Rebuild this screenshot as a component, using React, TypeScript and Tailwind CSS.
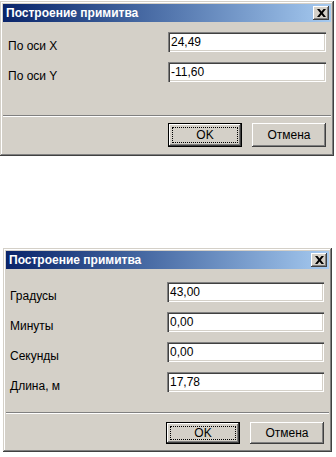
import React from "react";

type Row = { label: string; value: string };

const raised =
  "shadow-[inset_-1px_-1px_#404040,inset_1px_1px_#fff,inset_-2px_-2px_#808080]";

function CloseBox() {
  return (
    <div className={"w-[16px] h-[14px] bg-[#d4d0c8] flex items-center justify-center " + raised}>
      <svg width="9" height="8" viewBox="0 0 9 8">
        <path d="M0 0h2.5L4.5 2.6 6.5 0H9L5.8 4 9 8H6.5L4.5 5.4 2.5 8H0l3.2-4z" fill="#000" />
      </svg>
    </div>
  );
}

function Btn({ label, def, h }: { label: string; def?: boolean; h: string }) {
  if (def) {
    return (
      <div className={"w-[74px] border border-black bg-[#d4d0c8] flex p-[3px] text-[12px] text-black " + h + " " + raised}>
        <div className="flex-1 border border-dotted border-black flex items-center justify-center leading-none">
          {label}
        </div>
      </div>
    );
  }
  return (
    <div className={"w-[74px] bg-[#d4d0c8] flex items-center justify-center text-[12px] text-black " + h + " " + raised}>
      {label}
    </div>
  );
}

function Dialog({
  rows,
  box,
  labelCol,
  fieldW,
  topGap,
  sepGap,
  btnRow,
  btnH,
}: {
  rows: Row[];
  box: string;
  labelCol: string;
  fieldW: string;
  topGap: string;
  sepGap: string;
  btnRow: string;
  btnH: string;
}) {
  return (
    <div
      className={
        "bg-[#d4d0c8] p-[3px] shadow-[inset_-1px_-1px_#404040,inset_1px_1px_#d4d0c8,inset_-2px_-2px_#808080,inset_2px_2px_#fff] " +
        box
      }
    >
      <div className="h-[18px] bg-gradient-to-r from-[#0a246a] to-[#a6caf0] flex items-center justify-between pl-[3px] pr-[2px]">
        <span className="text-white font-bold text-[12px] leading-none">Построение примитва</span>
        <CloseBox />
      </div>
      <div className={"flex flex-col gap-[10px] " + topGap}>
        {rows.map((r) => (
          <div key={r.label} className="flex h-[20px]">
            <span className={"text-[12px] leading-[16px] text-black mt-[6px] " + labelCol}>{r.label}</span>
            <div
              className={
                "h-[20px] bg-white shadow-[inset_1px_1px_#808080,inset_2px_2px_#404040,inset_-1px_-1px_#fff,inset_-2px_-2px_#d4d0c8] pl-[3px] flex items-center text-[12px] text-black " +
                fieldW
              }
            >
              {r.value}
            </div>
          </div>
        ))}
      </div>
      <div className={"border-t border-b border-t-[#808080] border-b-white " + sepGap} />
      <div className={"flex justify-end gap-[10px] " + btnRow}>
        <Btn label="OK" def h={btnH} />
        <Btn label="Отмена" h={btnH} />
      </div>
    </div>
  );
}

export default function App() {
  return (
    <div
      className="w-[336px] h-[457px] bg-white flex flex-col overflow-hidden"
      style={{ fontFamily: '"Liberation Sans", Arial, sans-serif' }}
    >
      <div className="pt-[1px]">
        <Dialog
          box="w-[334px]"
          labelCol="w-[165px] pl-[5px]"
          fieldW="w-[158px]"
          topGap="pt-[10px]"
          sepGap="mt-[33px]"
          btnRow="pt-[6px] pb-[6px] pr-[5px]"
          btnH="h-[24px]"
          rows={[
            { label: "По оси X", value: "24,49" },
            { label: "По оси Y", value: "-11,60" },
          ]}
        />
      </div>
      <div className="mt-[92px] ml-[3px]">
        <Dialog
          box="w-[329px]"
          labelCol="w-[161px] pl-[4px]"
          fieldW="w-[157px]"
          topGap="pt-[13px]"
          sepGap="mt-[20px]"
          btnRow="pt-[8px] pb-[5px] pr-[5px]"
          btnH="h-[22px]"
          rows={[
            { label: "Градусы", value: "43,00" },
            { label: "Минуты", value: "0,00" },
            { label: "Секунды", value: "0,00" },
            { label: "Длина, м", value: "17,78" },
          ]}
        />
      </div>
    </div>
  );
}
